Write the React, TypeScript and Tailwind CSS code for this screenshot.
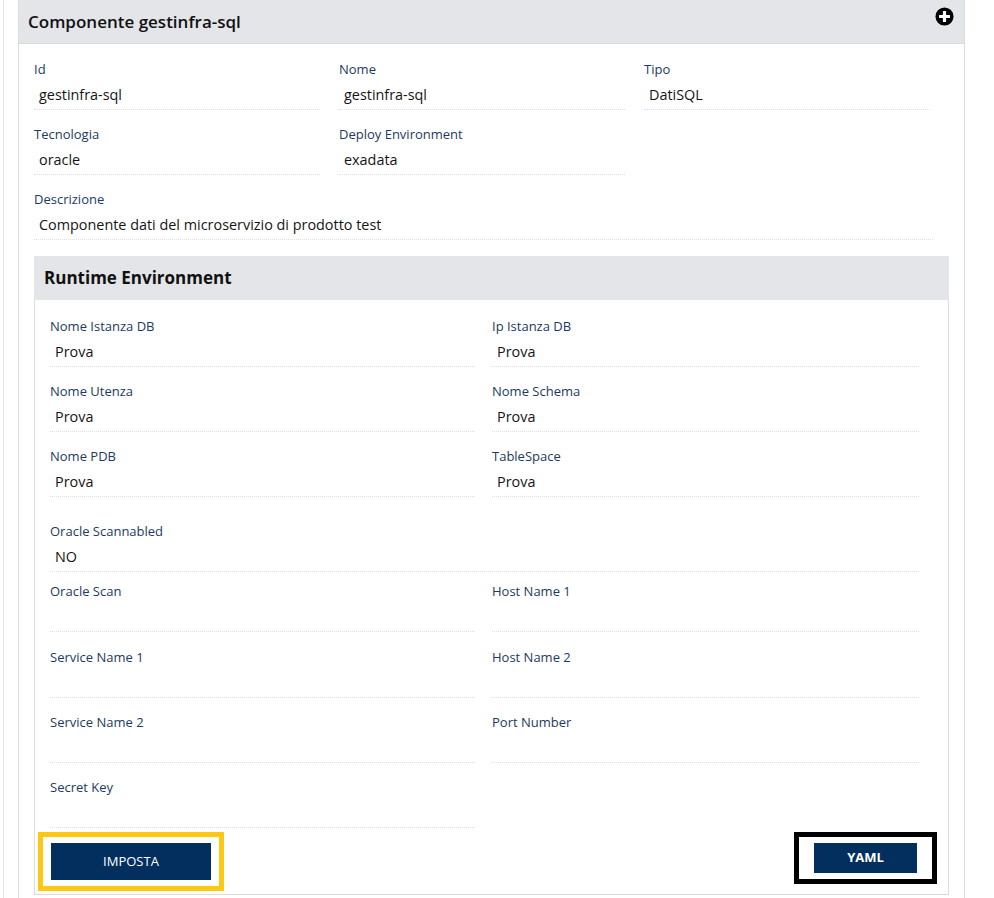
import React from "react";

type FieldProps = { label: string; value?: string; className?: string };

function Field({ label, value, className = "" }: FieldProps) {
  return (
    <div className={className}>
      <div className="text-[13px] leading-[20px] text-[#1d3a62]">{label}</div>
      <div className="mt-[4px] h-[27px] border-b border-dotted border-[#dedede] pl-[5px] text-[14.4px] leading-[23px] text-[#151515]">
        {value ?? ""}
      </div>
    </div>
  );
}

function PlusCircle() {
  return (
    <svg width="19" height="19" viewBox="0 0 20 20" aria-hidden="true">
      <circle cx="10" cy="10" r="9.5" fill="#000" />
      <rect x="8.3" y="4.2" width="3.4" height="11.6" rx="0.6" fill="#fff" />
      <rect x="4.2" y="8.3" width="11.6" height="3.4" rx="0.6" fill="#fff" />
    </svg>
  );
}

export default function App() {
  return (
    <div className="min-h-[898px] bg-white pl-[3px] font-['Open_Sans',sans-serif]">
      <div className="min-h-[898px] border-l border-[#e3e3e3] pl-[14px]">
        <div className="min-h-[898px] w-[947px] border-x border-[#dcdcdc] bg-white">
          {/* header */}
          <div className="flex h-[44px] items-center justify-between border-b border-[#d8d9dc] bg-[#e4e5e9] pl-[9px] pr-[10px]">
            <div className="pt-[1px] text-[17px] font-semibold text-[#111]">Componente gestinfra-sql</div>
            <div className="-mt-[10px]">
              <PlusCircle />
            </div>
          </div>

          {/* body */}
          <div className="pl-[15px] pr-[15px] pt-[15px] pb-[2px]">
            <div className="grid grid-cols-3">
              <Field label="Id" value="gestinfra-sql" className="mb-[14px] pr-[19px]" />
              <Field label="Nome" value="gestinfra-sql" className="mb-[14px] pr-[19px]" />
              <Field label="Tipo" value="DatiSQL" className="mb-[14px] pr-[19px]" />
              <Field label="Tecnologia" value="oracle" className="mb-[14px] pr-[19px]" />
              <Field label="Deploy Environment" value="exadata" className="mb-[14px] pr-[19px]" />
              <div />
              <Field
                label="Descrizione"
                value="Componente dati del microservizio di prodotto test"
                className="col-span-3 mb-[16px] pr-[16px]"
              />
            </div>

            {/* runtime environment */}
            <div>
              <div className="flex h-[44px] items-center bg-[#e4e5e9] pl-[10px] text-[17px] font-bold text-[#111]">
                Runtime Environment
              </div>
              <div className="border-x border-b border-[#dcdcdc] pl-[15px] pr-[14px] pt-[16px] pb-[3px]">
                <div className="grid grid-cols-2">
                  <Field label="Nome Istanza DB" value="Prova" className="mb-[14px] pr-[17px]" />
                  <Field label="Ip Istanza DB" value="Prova" className="mb-[14px] pr-[15px]" />
                  <Field label="Nome Utenza" value="Prova" className="mb-[14px] pr-[17px]" />
                  <Field label="Nome Schema" value="Prova" className="mb-[14px] pr-[15px]" />
                  <Field label="Nome PDB" value="Prova" className="mb-[14px] pr-[17px]" />
                  <Field label="TableSpace" value="Prova" className="mb-[14px] pr-[15px]" />
                  <Field label="Oracle Scannabled" value="NO" className="col-span-2 mb-[9px] mt-[10px] pr-[15px]" />
                  <Field label="Oracle Scan" className="mb-[15px] pr-[17px]" />
                  <Field label="Host Name 1" className="mb-[15px] pr-[15px]" />
                  <Field label="Service Name 1" className="mb-[14px] pr-[17px]" />
                  <Field label="Host Name 2" className="mb-[14px] pr-[15px]" />
                  <Field label="Service Name 2" className="mb-[14px] pr-[17px]" />
                  <Field label="Port Number" className="mb-[14px] pr-[15px]" />
                  <Field label="Secret Key" className="pr-[17px]" />
                </div>

                <div className="-ml-[12px] -mr-[3px] mt-[4px] flex items-start justify-between">
                  <div className="border-[5px] border-[#fcc814] px-[8px] py-[6px]">
                    <button className="flex h-[37px] w-[160px] items-center justify-center bg-[#022f5e] text-[13px] font-medium text-white">
                      IMPOSTA
                    </button>
                  </div>
                  <div className="border-[5px] border-black px-[15px] py-[6px]">
                    <button className="flex h-[30px] w-[103px] items-center justify-center bg-[#022f5e] text-[13px] font-bold text-white">
                      YAML
                    </button>
                  </div>
                </div>
              </div>
            </div>
          </div>
        </div>
      </div>
    </div>
  );
}
